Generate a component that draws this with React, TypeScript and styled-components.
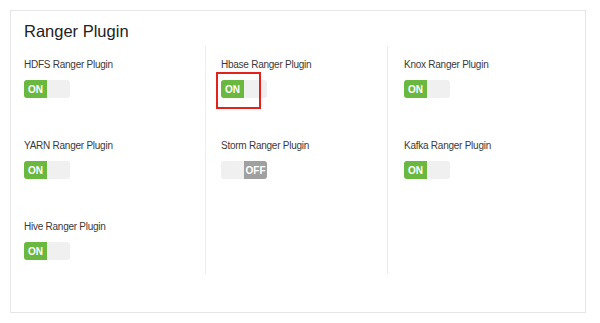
import React from "react";
import styled, { createGlobalStyle } from "styled-components";

type Plugin = { name: string; on: boolean; highlight?: boolean };

const columns: Plugin[][] = [
    [
        { name: "HDFS Ranger Plugin", on: true },
        { name: "YARN Ranger Plugin", on: true },
        { name: "Hive Ranger Plugin", on: true },
    ],
    [
        { name: "Hbase Ranger Plugin", on: true, highlight: true },
        { name: "Storm Ranger Plugin", on: false },
    ],
    [
        { name: "Knox Ranger Plugin", on: true },
        { name: "Kafka Ranger Plugin", on: true },
    ],
];

export default function App() {
    return (
        <>
            <GlobalStyle />
            <Page>
                <Panel>
                    <Title>Ranger Plugin</Title>
                    <Grid>
                        {columns.map((col, i) => (
                            <Column key={i} $first={i === 0} $pad={i === 2 ? 16 : 15}>
                                {col.map((p) => (
                                    <Item key={p.name}>
                                        <Label>{p.name}</Label>
                                        <Toggle>
                                            {p.on ? (
                                                <>
                                                    <OnHalf>ON</OnHalf>
                                                    <Blank />
                                                </>
                                            ) : (
                                                <>
                                                    <Blank />
                                                    <OffHalf>OFF</OffHalf>
                                                </>
                                            )}
                                            {p.highlight && <Highlight />}
                                        </Toggle>
                                    </Item>
                                ))}
                            </Column>
                        ))}
                    </Grid>
                </Panel>
            </Page>
        </>
    );
}

const GlobalStyle = createGlobalStyle`
    html, body {
        margin: 0;
        padding: 0;
        background: #ffffff;
    }
    body {
        font-family: "Liberation Sans", Arial, sans-serif;
    }
`;

const Page = styled.div`
    padding: 10px;
`;

const Panel = styled.div`
    box-sizing: border-box;
    width: 576px;
    height: 303px;
    border: 1px solid #e6e6e6;
    padding: 10px 13px 0 13px;
`;

const Title = styled.h2`
    margin: 0;
    font-size: 16.5px;
    line-height: 20px;
    font-weight: normal;
    color: #222;
`;

const Grid = styled.div`
    display: grid;
    grid-template-columns: 181px 182px 1fr;
    margin-top: 5px;
`;

const Column = styled.div<{ $first: boolean; $pad: number }>`
    display: flex;
    flex-direction: column;
    gap: 42px;
    padding: 13px 0 14px ${(p) => (p.$first ? 0 : p.$pad)}px;
    border-left: ${(p) => (p.$first ? "none" : "1px solid #ededed")};
`;

const Item = styled.div`
    display: flex;
    flex-direction: column;
    gap: 9px;
    align-items: flex-start;
`;

const Label = styled.div`
    font-size: 10px;
    line-height: 12px;
    letter-spacing: -0.25px;
    color: #3a3a3a;
`;

const Toggle = styled.div`
    position: relative;
    display: flex;
    width: 46px;
    height: 18px;
    border-radius: 3px;
    background: #f0f0f0;
`;

const Half = styled.div`
    width: 23px;
    height: 18px;
    display: flex;
    align-items: center;
    justify-content: center;
    font-size: 10px;
    font-weight: bold;
    color: #ffffff;
`;

const OnHalf = styled(Half)`
    background: #6ab83f;
    border-radius: 3px 0 0 3px;
`;

const OffHalf = styled(Half)`
    background: #a0a0a0;
    border-radius: 0 3px 3px 0;
`;

const Blank = styled(Half)``;

const Highlight = styled.div`
    position: absolute;
    left: -5px;
    top: -8px;
    width: 45px;
    height: 37px;
    box-sizing: border-box;
    border: 2.5px solid #e3221c;
`;
